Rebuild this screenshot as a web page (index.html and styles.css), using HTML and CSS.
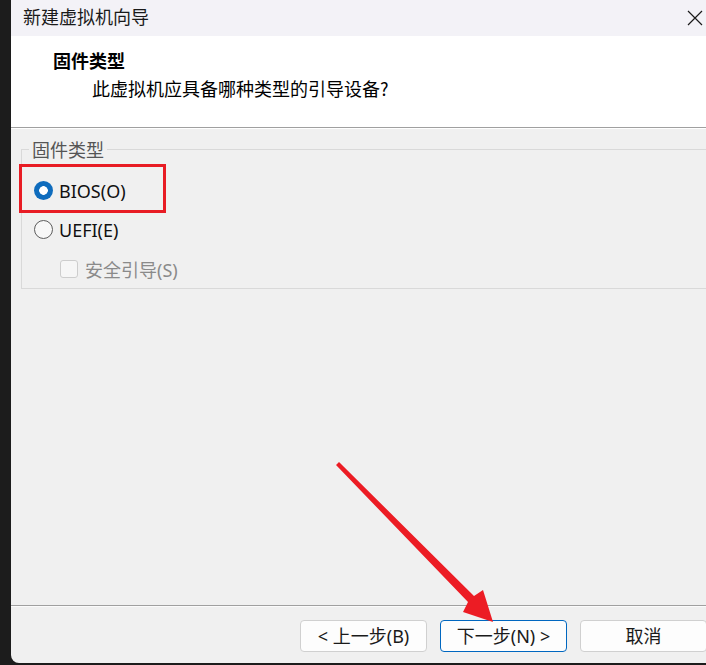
FILE: index.html
```html
<!DOCTYPE html>
<html lang="zh-CN">
<head>
  <meta charset="UTF-8" />
  <title>新建虚拟机向导</title>
  <link rel="stylesheet" href="styles.css">
</head>
<body>

  <div class="ventana">
    <div class="barra-titulo">
      <span class="titulo">新建虚拟机向导</span>
      <svg class="cerrar" width="16" height="16" viewBox="0 0 16 16">
        <path d="M1 1 L15 15 M15 1 L1 15" stroke="#1a1a1a" stroke-width="1.2" fill="none" />
      </svg>
    </div>

    <div class="cabecera">
      <div class="cab-titulo">固件类型</div>
      <div class="cab-sub">此虚拟机应具备哪种类型的引导设备?</div>
    </div>

    <div class="cuerpo">
      <fieldset class="grupo">
        <legend>固件类型</legend>
        <div class="opcion">
          <span class="radio marcado"></span>
          <span>BIOS(O)</span>
        </div>
        <div class="opcion">
          <span class="radio"></span>
          <span>UEFI(E)</span>
        </div>
        <div class="opcion deshabilitado">
          <span class="check"></span>
          <span>安全引导(S)</span>
        </div>
      </fieldset>
    </div>

    <div class="pie">
      <button class="boton">&lt; 上一步(B)</button>
      <button class="boton activo">下一步(N) &gt;</button>
      <button class="boton">取消</button>
    </div>
  </div>

  <!-- anotaciones -->
  <div class="marco-rojo"></div>
  <svg class="flecha" width="706" height="665" viewBox="0 0 706 665">
    <polygon points="339,462 474,596 483,590 493,622 463,612 468,602 336,465" fill="#ec1c24" />
  </svg>

</body>
</html>
```

FILE: styles.css
```css
/* Reset */
* {
  box-sizing: border-box;
}
body {
  margin: 0;
  width: 706px;
  height: 665px;
  background: #1c1c1c;
  position: relative;
  overflow: hidden;
  font-family: "Noto Sans", "Noto Sans CJK SC", sans-serif;
  font-size: 18px;
  color: #111;
}

.ventana {
  margin-left: 11px;
  width: 700px;
  height: 663px;
  background: #f0f0f0;
  border-bottom-left-radius: 8px;
  display: flex;
  flex-direction: column;
  overflow: hidden;
}

.barra-titulo {
  height: 36px;
  flex-shrink: 0;
  background: #f3f2f7;
  display: flex;
  align-items: center;
  justify-content: space-between;
  padding: 0 8px 4px 12px;
}
.titulo {
  font-family: "Noto Sans CJK SC", sans-serif;
  font-size: 18px;
  line-height: 24px;
  color: #1a1a1a;
}
.cerrar {
  margin-top: 4px;
}

.cabecera {
  height: 92px;
  flex-shrink: 0;
  background: #fff;
  border-bottom: 1px solid #a0a0a0;
  box-shadow: 0 1px 0 #fff;
  padding: 10px 0 0 42px;
  font-family: "Noto Sans CJK SC", sans-serif;
}
.cab-titulo {
  font-weight: 700;
  line-height: 28px;
  color: #000;
}
.cab-sub {
  line-height: 28px;
  margin-left: 39px;
  color: #000;
}

.cuerpo {
  flex: 1;
  padding: 11px 0 0 10px;
}

.grupo {
  margin: 0 -10px 0 0;
  padding: 12px 0 0 12px;
  border: 1px solid #d9d9d9;
  min-width: 0;
}
.grupo legend {
  margin-left: -5px;
  padding: 0 3px;
  line-height: 20px;
  color: #555;
  font-family: "Noto Sans CJK SC", sans-serif;
}

.opcion {
  height: 39px;
  display: flex;
  align-items: center;
  gap: 6px;
}
.radio {
  width: 19px;
  height: 19px;
  border-radius: 50%;
  border: 1px solid #5c5c5c;
  background: #f7f7f7;
}
.radio.marcado {
  border: none;
  background: radial-gradient(circle, #fff 0 4px, #0f6cbd 4.6px);
}
.deshabilitado {
  color: #8a8a8a;
  padding-left: 26px;
  gap: 7px;
}
.check {
  width: 18px;
  height: 18px;
  border: 1px solid #cdcdcd;
  border-radius: 3px;
  background: #f6f6f6;
}

.pie {
  height: 58px;
  flex-shrink: 0;
  border-top: 1px solid #a0a0a0;
  box-shadow: inset 0 1px 0 #fbfbfb;
  display: flex;
  gap: 13px;
  padding: 14px 0 0 289px;
}
.boton {
  width: 127px;
  height: 32px;
  flex-shrink: 0;
  background: #fdfdfd;
  border: 1px solid #d0d0d0;
  border-radius: 4px;
  font-family: "Noto Sans", "Noto Sans CJK SC", sans-serif;
  font-size: 18px;
  color: #1a1a1a;
  padding: 0;
  line-height: 28px;
}
.boton.activo {
  border-color: #0067c0;
}

.marco-rojo {
  position: absolute;
  left: 19px;
  top: 164px;
  width: 147px;
  height: 49px;
  border: 3px solid #e81c24;
}
.flecha {
  position: absolute;
  left: 0;
  top: 0;
}
```
